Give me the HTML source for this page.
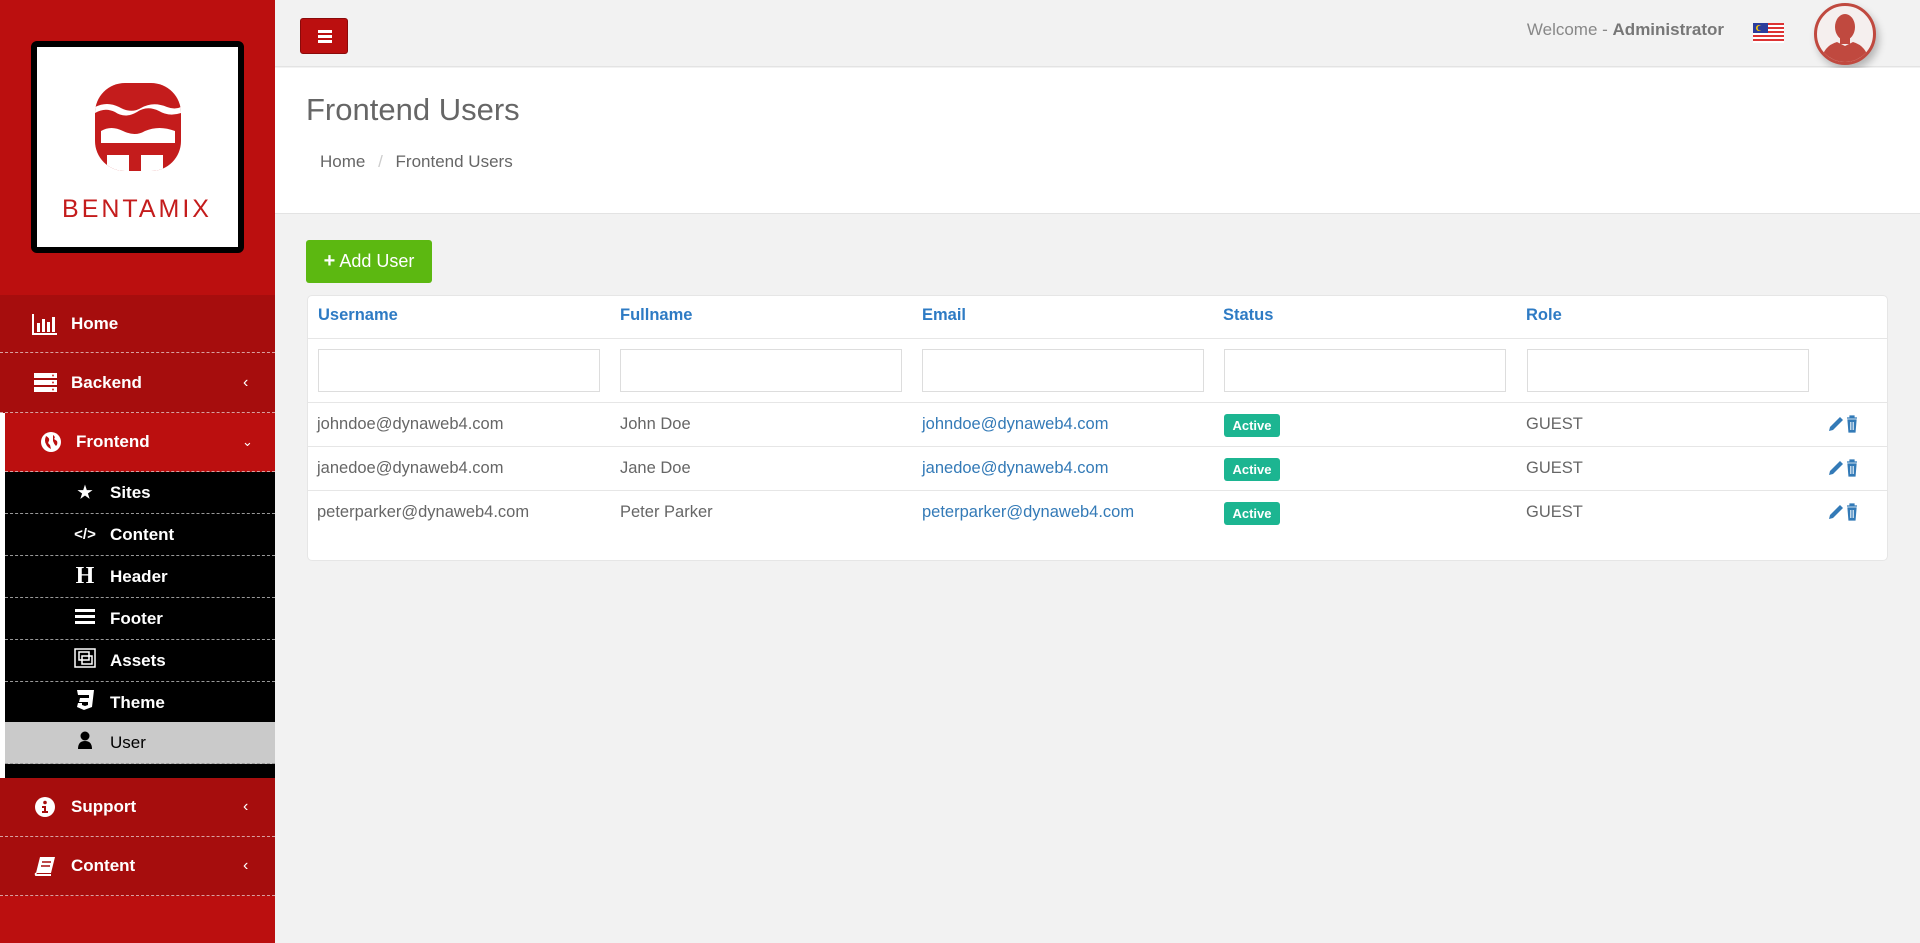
<!DOCTYPE html>
<html><head><meta charset="utf-8"><style>
*{box-sizing:border-box;margin:0;padding:0}
body{width:1920px;height:943px;overflow:hidden;background:#f2f2f2;font-family:"Liberation Sans",sans-serif;position:relative}
.sb{position:absolute;left:0;top:0;width:275px;height:943px;background:#bb0f0f}
.logo{position:absolute;left:31px;top:41px;width:213px;height:212px;background:#fff;border:6px solid #000;border-radius:6px}
.mi{position:absolute;left:0;width:275px;color:#fff;font-weight:bold;font-size:17px;display:flex;align-items:center}
.dash{border-bottom:1px dashed #d9a0a0}
.sub{position:absolute;left:5px;width:270px;height:42px;background:#000;color:#fff;font-weight:bold;font-size:17px;display:flex;align-items:center;border-bottom:1px dashed #999}
.sub .ic{position:absolute;left:68px;width:24px;text-align:center}
.sub span.t{position:absolute;left:105px}
.chev{position:absolute;left:243px;font-size:16px;font-weight:normal}
.top{position:absolute;left:275px;top:0;right:0;height:67px;background:#f2f2f2;border-bottom:1px solid #e3e3e3}
.ham{position:absolute;left:300px;top:18px;width:48px;height:36px;background:#bb0f0f;border-radius:3px;border:1px solid #8a0a0a}
.ham i{position:absolute;left:17px;width:14px;height:2.5px;background:#fff}
.panel{position:absolute;left:275px;top:68px;right:0;height:146px;background:#fff;border-bottom:1px solid #e3e3e3}
.card{position:absolute;left:307px;top:295px;width:1581px;height:266px;background:#fff;border-radius:5px;border:1px solid #e6e6e6}
.th{position:absolute;top:306px;color:#2e7bc4;font-weight:bold;font-size:16.5px}
.inp{position:absolute;top:349px;width:282px;height:43px;border:1px solid #ddd;background:#fff}
.hl{position:absolute;left:308px;width:1579px;height:1px;background:#e6e6e6}
.td{position:absolute;font-size:16.5px;color:#666}
.lk{color:#337ab7}
.bd{position:absolute;left:1224px;width:56px;height:23px;background:#1cb591;color:#fff;font-size:13px;font-weight:bold;border-radius:3px;text-align:center;line-height:23px}
</style></head><body>
<div class="sb">
 <div class="logo">
  <svg width="201" height="200" viewBox="0 0 201 200" style="position:absolute;left:0;top:0">
   <defs><clipPath id="c"><rect x="58" y="36" width="86" height="88" rx="30"/></clipPath></defs>
   <g clip-path="url(#c)">
    <rect x="58" y="36" width="86" height="88" fill="#c41c1c"/>
    <path d="M58 60 Q70 54 82 60 Q94 67 104 61 Q116 54 130 60 Q138 63 144 60 L144 66 Q132 70 122 64 Q110 58 100 65 Q88 72 78 65 Q68 60 58 66Z" fill="#fff"/>
    <path d="M64 84 Q74 78 86 84 Q98 90 108 84 Q122 78 138 84 L138 96 L64 96Z" fill="#fff"/>
    <rect x="70" y="108" width="22" height="20" fill="#fff"/><rect x="104" y="108" width="22" height="20" fill="#fff"/>
   </g>
   <text x="100" y="170" text-anchor="middle" font-family="Liberation Sans" font-size="25" letter-spacing="3" fill="#c41c1c">BENTAMIX</text>
  </svg>
 </div>
 <div class="mi dash" style="top:295px;height:58px;background:#a60d0d">
  <svg style="position:absolute;left:32px" width="26" height="22" viewBox="0 0 26 22"><path d="M1 1V21H25" stroke="#fff" stroke-width="2" fill="none"/><rect x="5" y="10" width="3" height="9" fill="#fff"/><rect x="10" y="6" width="3" height="13" fill="#fff"/><rect x="15" y="9" width="3" height="10" fill="#fff"/><rect x="20" y="4" width="3" height="15" fill="#fff"/></svg>
  <span style="position:absolute;left:71px">Home</span></div>
 <div class="mi dash" style="top:353px;height:60px;background:#a60d0d">
  <svg style="position:absolute;left:34px" width="23" height="20" viewBox="0 0 23 20"><rect y="0" width="23" height="5" fill="#fff"/><rect y="7" width="23" height="5" fill="#fff"/><rect y="14" width="23" height="5" fill="#fff"/><circle cx="19" cy="2.5" r="1" fill="#c33"/><circle cx="19" cy="9.5" r="1" fill="#c33"/><circle cx="19" cy="16.5" r="1" fill="#c33"/></svg>
  <span style="position:absolute;left:71px">Backend</span><span class="chev">‹</span></div>
 <div style="position:absolute;left:0;top:413px;width:5px;height:365px;background:#fff"></div>
 <div class="mi dash" style="top:413px;height:59px;left:5px;width:270px;background:#bb0f0f">
  <svg style="position:absolute;left:36px" width="20" height="20" viewBox="0 0 20 20"><circle cx="10" cy="10" r="10" fill="#fff"/><path d="M5 4 Q9 6 8 9 Q6 11 9 13 L10 17 Q6 15 5 12 Q3 9 5 4Z M12 3 Q15 5 13 7 L16 9 Q17 12 15 14 Q13 12 12 9Z" fill="#bb0f0f"/></svg>
  <span style="position:absolute;left:71px">Frontend</span><span class="chev" style="left:237px;font-size:13px">⌄</span></div>
 <div class="sub" style="top:472px"><span class="ic">★</span><span class="t">Sites</span></div>
 <div class="sub" style="top:514px"><span class="ic" style="font-size:15px">&lt;/&gt;</span><span class="t">Content</span></div>
 <div class="sub" style="top:556px"><span class="ic" style="font-family:'Liberation Serif';font-size:24px">H</span><span class="t">Header</span></div>
 <div class="sub" style="top:598px"><span class="ic"><svg width="20" height="16"><rect y="1" width="20" height="3" fill="#fff"/><rect y="7" width="20" height="3" fill="#fff"/><rect y="13" width="20" height="3" fill="#fff"/></svg></span><span class="t">Footer</span></div>
 <div class="sub" style="top:640px"><span class="ic"><svg width="24" height="22" viewBox="0 0 24 22"><rect x="2" y="2" width="20" height="18" fill="none" stroke="#fff" stroke-width="1.5"/><rect x="6" y="5" width="10" height="8" fill="none" stroke="#fff" stroke-width="1.5"/><rect x="9" y="9" width="10" height="8" fill="none" stroke="#fff" stroke-width="1.5"/></svg></span><span class="t">Assets</span></div>
 <div class="sub" style="top:682px"><span class="ic"><svg width="20" height="22" viewBox="0 0 20 22"><path d="M2 1H19L17 18L9 21L2 18L3 14H7L7 16L10 17L13 16L13 13H4L5 9H14L14 6H3Z" fill="#fff"/></svg></span><span class="t">Theme</span></div>
 <div class="sub" style="top:722px;background:#cacaca;color:#000;font-weight:normal"><span class="ic"><svg width="16" height="18" viewBox="0 0 16 18"><circle cx="8" cy="5" r="4.5" fill="#000"/><path d="M1 18Q1 10 8 10Q15 10 15 18Z" fill="#000"/></svg></span><span class="t">User</span></div>
 <div style="position:absolute;left:5px;top:764px;width:270px;height:14px;background:#000"></div>
 <div class="mi dash" style="top:778px;height:59px;background:#a60d0d">
  <svg style="position:absolute;left:35px" width="20" height="20"><circle cx="10" cy="10" r="10" fill="#fff"/><circle cx="10" cy="5.5" r="1.8" fill="#a60d0d"/><path d="M7 9H11V14H13V16H7V14H9V11H7Z" fill="#a60d0d"/></svg>
  <span style="position:absolute;left:71px">Support</span><span class="chev">‹</span></div>
 <div class="mi dash" style="top:837px;height:59px;background:#a60d0d">
  <svg style="position:absolute;left:34px" width="22" height="20" viewBox="0 0 22 20"><path d="M6 1H21L17 17H2Z" fill="#fff"/><path d="M2 17Q1 20 4 19H17" stroke="#fff" stroke-width="2" fill="none"/><path d="M8 6H17M7 10H16" stroke="#a60d0d" stroke-width="1.5"/></svg>
  <span style="position:absolute;left:71px">Content</span><span class="chev">‹</span></div>
</div>
<div class="top"></div>
<div class="ham"><i style="top:11px"></i><i style="top:16px"></i><i style="top:21px"></i></div>
<div style="position:absolute;right:196px;top:20px;font-size:17px;color:#888">Welcome - <b style="color:#777">Administrator</b></div>
<svg style="position:absolute;left:1753px;top:23px" width="31" height="20" viewBox="0 0 31 20"><rect width="31" height="20" fill="#fff"/><g fill="#d33"><rect y="0" width="31" height="2"/><rect y="4" width="31" height="2"/><rect y="8" width="31" height="2"/><rect y="12" width="31" height="2"/><rect y="16" width="31" height="2"/></g><rect width="15" height="10" fill="#2b3d9c"/><circle cx="6" cy="5" r="3" fill="#fc0"/><circle cx="7" cy="5" r="2.4" fill="#2b3d9c"/></svg>
<div style="position:absolute;left:1814px;top:3px;width:62px;height:62px;border-radius:50%;background:#f5efee;border:3px solid #c0493f;box-shadow:3px 5px 8px rgba(0,0,0,.25);overflow:hidden">
 <svg width="56" height="56" viewBox="0 0 56 56"><ellipse cx="28" cy="21" rx="10" ry="13" fill="#c0493f"/><path d="M4 56Q6 40 20 36L28 40L36 36Q50 40 52 56Z" fill="#c0493f"/><rect x="23" y="30" width="10" height="8" fill="#c0493f"/></svg>
</div>
<div class="panel"></div>
<div style="position:absolute;left:306px;top:92px;font-size:31px;color:#666;font-weight:300">Frontend Users</div>
<div style="position:absolute;left:320px;top:152px;font-size:17px;color:#666">Home <span style="color:#ccc;margin:0 8px">/</span> Frontend Users</div>
<div style="position:absolute;left:306px;top:240px;width:126px;height:43px;background:#5cb811;border-radius:3px;color:#fff;font-size:18px;line-height:43px;text-align:center"><b style="font-size:20px">+</b> Add User</div>
<div class="card"></div>
<div class="th" style="left:318px">Username</div><div class="th" style="left:620px">Fullname</div><div class="th" style="left:922px">Email</div><div class="th" style="left:1223px">Status</div><div class="th" style="left:1526px">Role</div>
<div class="hl" style="top:338px"></div>
<div class="inp" style="left:318px"></div><div class="inp" style="left:620px"></div><div class="inp" style="left:922px"></div><div class="inp" style="left:1224px"></div><div class="inp" style="left:1527px"></div>
<div class="hl" style="top:402px"></div><div class="hl" style="top:446px"></div><div class="hl" style="top:490px"></div>
<div class="td" style="left:317px;top:415px">johndoe@dynaweb4.com</div><div class="td" style="left:620px;top:415px">John Doe</div><div class="td lk" style="left:922px;top:415px">johndoe@dynaweb4.com</div><div class="bd" style="top:414px">Active</div><div class="td" style="left:1526px;top:415px">GUEST</div>
<div class="td" style="left:317px;top:459px">janedoe@dynaweb4.com</div><div class="td" style="left:620px;top:459px">Jane Doe</div><div class="td lk" style="left:922px;top:459px">janedoe@dynaweb4.com</div><div class="bd" style="top:458px">Active</div><div class="td" style="left:1526px;top:459px">GUEST</div>
<div class="td" style="left:317px;top:503px">peterparker@dynaweb4.com</div><div class="td" style="left:620px;top:503px">Peter Parker</div><div class="td lk" style="left:922px;top:503px">peterparker@dynaweb4.com</div><div class="bd" style="top:502px">Active</div><div class="td" style="left:1526px;top:503px">GUEST</div>
<svg style="position:absolute;left:1828px;top:414px" width="40" height="120" viewBox="0 0 40 120">
 <g id="r"><path d="M1 17L2 13L12 3L15 6L5 16Z" fill="#337ab7"/><path d="M19 4H29M22 4V2H26V4M20 6H28L27 18H21Z" fill="#337ab7" stroke="#337ab7" stroke-width="1.2"/><path d="M22.5 8V16M24 8V16M25.5 8V16" stroke="#fff" stroke-width="0.7"/></g>
 <use href="#r" y="44"/><use href="#r" y="88"/>
</svg>
</body></html>
